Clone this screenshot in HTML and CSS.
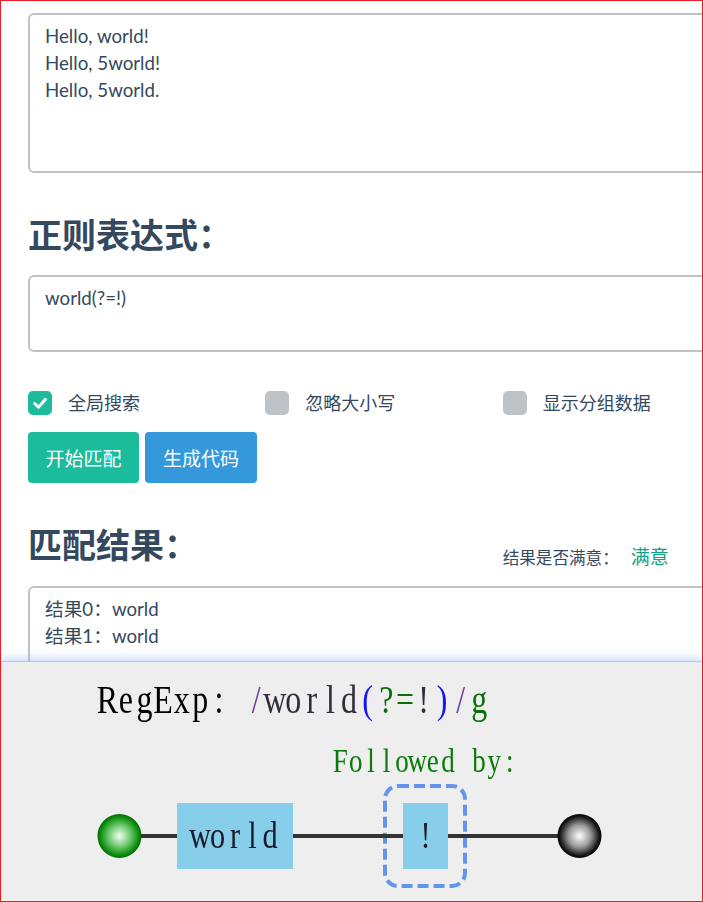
FILE: index.html
```html
<!DOCTYPE html>
<html lang="zh-CN">
<head>
<meta charset="utf-8">
<title>正则表达式测试</title>
<link rel="stylesheet" href="styles.css">
</head>
<body>
<div class="page">
  <textarea class="field field-text" spellcheck="false">Hello, world!
Hello, 5world!
Hello, 5world.</textarea>

  <h3 class="title">正则表达式：</h3>
  <textarea class="field field-regex" spellcheck="false">world(?=!)</textarea>

  <div class="options">
    <label class="opt">
      <span class="box checked"><svg viewBox="0 0 24 24" width="24" height="24"><path d="M6.5 12.5 L10.5 16.2 L17.5 8.3" fill="none" stroke="#fff" stroke-width="3" stroke-linecap="round" stroke-linejoin="round"/></svg></span>
      <span class="opt-label">全局搜索</span>
    </label>
    <label class="opt">
      <span class="box"></span>
      <span class="opt-label">忽略大小写</span>
    </label>
    <label class="opt">
      <span class="box"></span>
      <span class="opt-label">显示分组数据</span>
    </label>
  </div>

  <div class="actions">
    <button class="btn btn-match">开始匹配</button>
    <button class="btn btn-code">生成代码</button>
  </div>

  <div class="result-head">
    <h3 class="title title-result">匹配结果：</h3>
    <div class="satisfy"><span>结果是否满意：</span><a class="satisfy-link">满意</a></div>
  </div>
  <textarea class="field field-result" spellcheck="false">结果0：world
结果1：world</textarea>
</div>

<div class="visual">
  <svg class="diagram" width="701" height="239" viewBox="1 662 701 239">
    <defs>
      <radialGradient id="gStart" cx="50%" cy="50%" r="50%">
        <stop offset="0" stop-color="#f4fff4"/>
        <stop offset="0.5" stop-color="#6cc86c"/>
        <stop offset="0.88" stop-color="#0c8c0c"/>
        <stop offset="1" stop-color="#006a00"/>
      </radialGradient>
      <radialGradient id="gEnd" cx="50%" cy="50%" r="50%">
        <stop offset="0" stop-color="#ffffff"/>
        <stop offset="0.5" stop-color="#9a9a9a"/>
        <stop offset="0.88" stop-color="#1a1a1a"/>
        <stop offset="1" stop-color="#000000"/>
      </radialGradient>
    </defs>

    <g class="serif" transform="translate(107.3 713) scale(0.82 1)">
      <text font-size="39" text-anchor="middle"><tspan fill="#000" x="0 22.68 45.37 68.05 90.73 113.41 136.1">RegExp:</tspan><tspan fill="#6a3aa8" x="181.46">/</tspan><tspan fill="#2e2e3a" x="204.15 226.83 249.51 272.2 294.88">world</tspan><tspan fill="#1515f0" x="317.56">(</tspan><tspan fill="#087008" x="340.24 362.93">?=</tspan><tspan fill="#2e2e3a" x="385.61">!</tspan><tspan fill="#1515f0" x="408.29">)</tspan><tspan fill="#6a3aa8" x="430.98">/</tspan><tspan fill="#087008" x="453.66">g</tspan></text>
    </g>

    <g class="serif" transform="translate(340.3 772) scale(0.82 1)">
      <text font-size="33" text-anchor="middle" fill="#0a7a0a"><tspan x="0 18.78 37.56 56.34 75.12 93.9 112.68 131.46">Followed</tspan><tspan x="169.02 187.8 206.58">by:</tspan></text>
    </g>

    <rect x="385" y="786" width="80" height="100" rx="13" fill="none" stroke="#6495ed" stroke-width="4" stroke-dasharray="11 5"/>
    <path d="M140 836 H178 M292 836 H404 M447 836 H559" stroke="#333" stroke-width="4" fill="none"/>
    <rect x="177" y="803" width="116" height="66" fill="#87ceeb"/>
    <rect x="403" y="803" width="45" height="66" fill="#87ceeb"/>

    <g class="serif" transform="translate(200 848) scale(0.82 1)">
      <text font-size="37" text-anchor="middle" fill="#1a1a2a" x="0 21.34 42.68 64.02 85.37">world</text>
    </g>
    <g class="serif" transform="translate(425.5 848) scale(0.82 1)">
      <text font-size="37" text-anchor="middle" fill="#1a1a2a" x="0">!</text>
    </g>

    <circle cx="119.5" cy="836" r="22" fill="url(#gStart)"/>
    <circle cx="579.5" cy="836" r="22" fill="url(#gEnd)"/>
  </svg>
</div>

<div class="frame"></div>
</body>
</html>
```
FILE: styles.css
```css
html, body {
  margin: 0;
  padding: 0;
  overflow: hidden;
  background: #fff;
}

body {
  font-family: "Lato", "Noto Sans CJK SC", sans-serif;
  color: #34495e;
}

.page {
  width: 712px;
  padding: 13px 0 0 28px;
}

.field {
  display: block;
  box-sizing: border-box;
  width: 100%;
  margin: 0;
  padding: 8px 15px;
  border: 2px solid #bdc3c7;
  border-radius: 6px;
  font-family: "Lato", "Noto Sans CJK SC", sans-serif;
  font-size: 18.7px;
  line-height: 27px;
  color: #34495e;
  background: #fff;
  resize: none;
  overflow: hidden;
  outline: none;
}

.field-text { height: 160px; }
.field-regex { height: 77px; margin-top: 20px; }
.field-result { height: 160px; margin-top: 21px; }

.title {
  margin: 42px 0 0;
  font-size: 34px;
  line-height: 40px;
  font-weight: 700;
  color: #34495e;
}

.options {
  display: grid;
  grid-template-columns: repeat(3, 1fr);
  margin-top: 39px;
}

.opt {
  display: flex;
  align-items: center;
  gap: 16px;
  height: 24px;
}

.box {
  width: 24px;
  height: 24px;
  border-radius: 5px;
  background: #bdc3c7;
  display: block;
}

.box svg { display: block; }

.box.checked { background: #1abc9c; }

.opt-label {
  font-size: 18px;
  line-height: 24px;
}

.actions {
  display: flex;
  gap: 6px;
  margin-top: 17px;
}

.btn {
  height: 51px;
  padding: 0;
  border: none;
  border-radius: 4px;
  font-family: "Lato", "Noto Sans CJK SC", sans-serif;
  font-size: 19px;
  color: #fff;
  cursor: pointer;
}

.btn-match { background: #1abc9c; width: 111px; }
.btn-code { background: #3498db; width: 112px; }

.result-head {
  display: grid;
  grid-template-columns: 2fr 1fr;
  height: 40px;
  margin-top: 42px;
}

.result-head .title { margin: 0; }

.satisfy {
  display: flex;
  align-items: baseline;
  box-sizing: border-box;
  height: 40px;
  padding-top: 20px;
  line-height: 24px;
  font-size: 16.6px;
  white-space: nowrap;
}

.satisfy-link {
  margin-left: 12px;
  font-size: 19px;
  color: #16a085;
}

.visual {
  position: fixed;
  left: 1px;
  right: 1px;
  bottom: 1px;
  height: 239px;
  background: #eeeeee;
  border-top: 1px solid #a9c8f4;
  box-shadow: 0 -3px 8px rgba(130, 175, 250, 0.45);
}

.diagram { display: block; }

.serif { font-family: "Liberation Serif", serif; }

.frame {
  position: fixed;
  left: 0;
  top: 0;
  width: 703px;
  height: 902px;
  box-sizing: border-box;
  border: 1px solid #ed1c24;
  pointer-events: none;
  z-index: 10;
}
```
